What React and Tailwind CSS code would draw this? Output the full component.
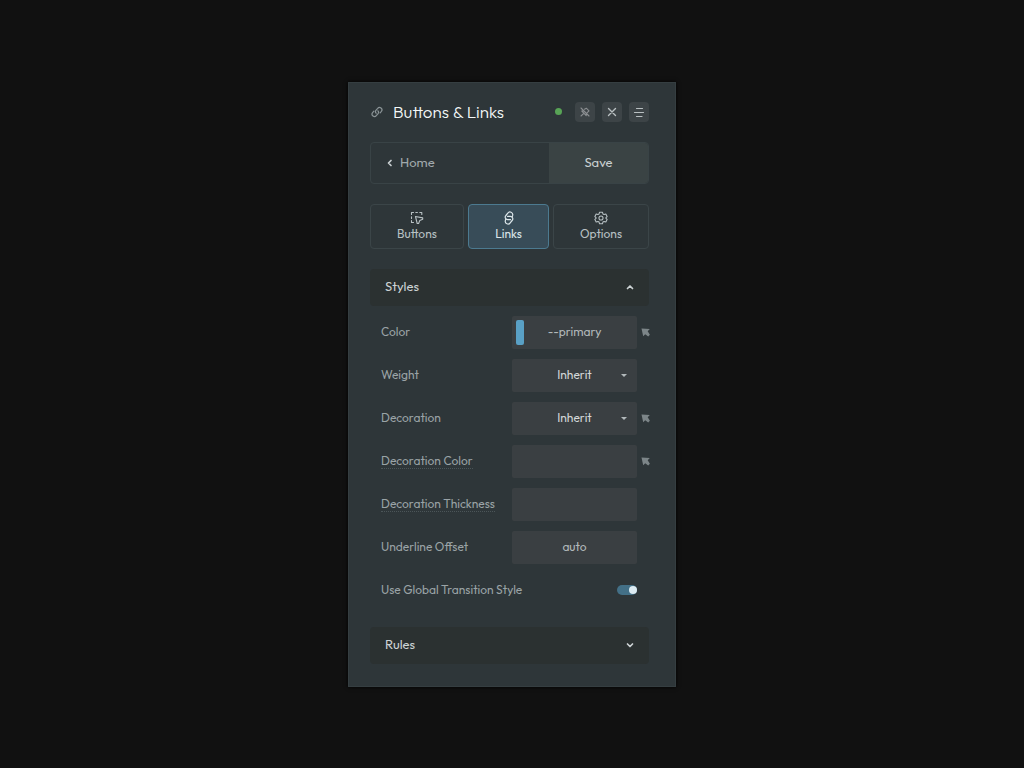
import { useState } from "react";

function ChainIcon({ className }) {
  return (
    <svg viewBox="0 0 12 12" className={className} fill="none" stroke="currentColor" strokeWidth="1.200" strokeLinecap="round" strokeLinejoin="round" aria-hidden="true">
      <path d="M5.200 7.200A2.100 2.100 0 0 1 4.900 4.400L6.700 2.400A2.300 2.300 0 0 1 10.400 5.300L9.100 6.800" />
      <path d="M6.800 4.800A2.100 2.100 0 0 1 7.100 7.600L5.300 9.600A2.300 2.300 0 0 1 1.600 6.700L2.900 5.200" />
    </svg>
  );
}

function UnpinIcon() {
  return (
    <svg viewBox="0 0 12 12" className="size-3" fill="none" stroke="currentColor" strokeWidth="1.100" strokeLinecap="round" strokeLinejoin="round" aria-hidden="true">
      <path d="M2 2l8 8M5.500 3.200L7.300 2.200l2.700 2.600-1.800 1.800M2.800 5h1.700M2.800 5l4.400 4.600V8M4.800 7.400L2 10" />
    </svg>
  );
}

function CloseIcon() {
  return (
    <svg viewBox="0 0 12 12" className="size-3" fill="none" stroke="currentColor" strokeWidth="1.400" strokeLinecap="round" aria-hidden="true">
      <path d="M2.500 2.500l7 7M9.500 2.500l-7 7" />
    </svg>
  );
}

function MenuIcon() {
  return (
    <svg viewBox="0 0 12 12" className="size-3" fill="none" stroke="currentColor" strokeWidth="1.200" strokeLinecap="round" aria-hidden="true">
      <path d="M3.500 2.500h6M1.500 6.500h9M3.500 10.500h5.500" />
    </svg>
  );
}

function ButtonsIcon() {
  return (
    <svg viewBox="0 0 14 14" className="size-3.5" fill="none" stroke="currentColor" strokeWidth="1.100" strokeLinecap="round" strokeLinejoin="round" aria-hidden="true">
      <path d="M1.500 3.500v-2h2M5.800 1.500h1.600M9.800 1.500h2v2M1.500 5.800v1.600M1.500 9.500v2h2" />
      <path d="M5.500 5.500l7.200 1.400v1.300l-2.900 1.200-1.200 3.100H7.200z" />
    </svg>
  );
}

function LinksIcon() {
  return (
    <svg viewBox="0 0 14 14" className="size-3.5" fill="none" stroke="currentColor" strokeWidth="1.200" strokeLinecap="round" strokeLinejoin="round" aria-hidden="true">
      <path d="M8.500 8.700H5.800A2.500 2.500 0 0 1 3.900 4.500L5.800 2.200A2.700 2.700 0 0 1 10.700 4.200L10.200 6" />
      <path d="M5.500 5.300h2.700A2.500 2.500 0 0 1 10.100 9.500L8.200 11.800A2.700 2.700 0 0 1 3.300 9.800L3.800 8" />
    </svg>
  );
}

function OptionsIcon() {
  return (
    <svg viewBox="0 0 24 24" className="size-3.5" fill="none" stroke="currentColor" strokeWidth="1.800" strokeLinejoin="round" aria-hidden="true">
      <path d="M9.500 2h5l.8 3 2 1.100 3-.8 2.200 4.200-2 2v1l2 2-2.200 4.200-3-.8-2 1.100-.8 3h-5l-.8-3-2-1.100-3 .8-2.200-4.200 2-2v-1l-2-2 2.200-4.200 3 .8 2-1.100z" />
      <circle cx="12" cy="12" r="3.500" />
    </svg>
  );
}

function Chevron({ d }) {
  return (
    <svg viewBox="0 0 8 8" className="size-2 shrink-0" fill="none" stroke="currentColor" strokeWidth="1.700" strokeLinecap="round" strokeLinejoin="round" aria-hidden="true">
      <path d={d} />
    </svg>
  );
}

function PickButton({ label }) {
  return (
    <button type="button" aria-label={label} className="text-[#7c8588]">
      <svg viewBox="0 0 9 9" className="size-[9px]" fill="currentColor" aria-hidden="true">
        <path d="M.5.500L8.800 1 6.700 3.200 8.900 6.800 7.200 8.500 4.200 6.300 2.200 8.200z" />
      </svg>
    </button>
  );
}

function ToolButton({ label, dim, children }) {
  return (
    <button
      type="button"
      aria-label={label}
      className={`flex size-5 items-center justify-center rounded bg-[#3d4447] ${dim ? "text-[#8b8e91]" : "text-[#b9c0c2]"}`}
    >
      {children}
    </button>
  );
}

function Tab({ label, active, grow, onClick, children }) {
  return (
    <button
      type="button"
      aria-pressed={active}
      onClick={onClick}
      className={`flex h-[45px] flex-col items-center justify-center rounded border ${grow} ${
        active ? "border-[#4c7a90] bg-[#384c58] text-[#dce6ea]" : "border-[#3b4548] text-[#b8c1c4]"
      }`}
    >
      {children}
      <span className="mt-px text-xs leading-4">{label}</span>
    </button>
  );
}

function Section({ title, open, onToggle }) {
  return (
    <h2>
      <button
        type="button"
        aria-expanded={open}
        onClick={onToggle}
        className="flex h-[37px] w-full items-center justify-between rounded bg-[#2b3131] px-[15px] text-[13px] text-[#ccd2d4]"
      >
        {title}
        <Chevron d={open ? "M1.500 5.500L4 3l2.500 2.500" : "M1.500 3L4 5.500 6.500 3"} />
      </button>
    </h2>
  );
}

function Row({ id, label, hint, pick, children }) {
  return (
    <div className="flex h-[33px] items-center gap-1">
      <label htmlFor={id} className="flex-1 text-xs leading-4 text-[#9aa3a6]">
        <span className={hint ? "border-b border-dotted border-[#4b5558]" : ""}>{label}</span>
      </label>
      {children}
      <div className="flex w-2">{pick && <PickButton label={`Pick ${label}`} />}</div>
    </div>
  );
}

const fieldStyle =
  "h-[33px] w-full appearance-none rounded-xs bg-[#3a3f42] text-center text-xs outline-none focus-visible:ring-1 focus-visible:ring-[#4c7a90]";

function TextField({ id, value, swatch }) {
  return (
    <div className="relative w-[125px]">
      <input id={id} type="text" defaultValue={value} className={`${fieldStyle} pb-0.5 text-[#b2b9bb]`} />
      {swatch && <span className="absolute top-1 left-1 h-[25px] w-2 rounded-xs bg-[#59a0c5]" />}
    </div>
  );
}

function SelectField({ id }) {
  return (
    <div className="relative w-[125px]">
      <select id={id} defaultValue="Inherit" className={`${fieldStyle} text-[#d2d7d9] [text-align-last:center]`}>
        <option>Inherit</option>
        <option>None</option>
      </select>
      <svg viewBox="0 0 6 3" className="pointer-events-none absolute top-[15px] right-2.5 h-[3px] w-1.5 fill-[#b2b9bb]" aria-hidden="true">
        <path d="M0 0h6L3 3z" />
      </svg>
    </div>
  );
}

export default function App() {
  const [tab, setTab] = useState("Links");
  const [styles, setStyles] = useState(true);
  const [rules, setRules] = useState(false);

  return (
    <main className="flex min-h-screen items-center justify-center bg-[#111111] font-['Outfit','Lato',sans-serif]">
      <section className="w-full max-w-[328px] border border-[#353e41] bg-[#2e3639] pt-[19px] pr-[26px] pb-[22px] pl-[21px] shadow-[0_0_4px_#000]">
        <header className="flex h-5 items-center">
          <ChainIcon className="ml-px size-3 text-[#8b9497]" />
          <h1 className="ml-2.5 flex-1 text-[17px] leading-5 font-light text-[#f4f8f8]">Buttons &amp; Links</h1>
          <div className="flex items-center gap-[7px]">
            <span className="mr-1.5 size-[7px] rounded-full bg-[#58a456]" />
            <ToolButton label="Unpin" dim><UnpinIcon /></ToolButton>
            <ToolButton label="Close"><CloseIcon /></ToolButton>
            <ToolButton label="Menu"><MenuIcon /></ToolButton>
          </div>
        </header>

        <div className="mt-5 flex h-[42px] overflow-hidden rounded border border-[#394346]">
          <button type="button" className="flex flex-1 items-center gap-1.5 pl-[15px] text-[13px] text-[#a0a9ac]">
            <span className="flex text-[#c8cfd1]"><Chevron d="M5 1.500L2.500 4 5 6.500" /></span>
            Home
          </button>
          <button type="button" className="w-[99px] bg-[#3a4344] text-[13px] text-[#c7cecf]">Save</button>
        </div>

        <nav className="mt-5 flex gap-1" aria-label="Panels">
          <Tab label="Buttons" grow="grow-94 basis-0" active={tab === "Buttons"} onClick={() => setTab("Buttons")}><ButtonsIcon /></Tab>
          <Tab label="Links" grow="grow-81 basis-0" active={tab === "Links"} onClick={() => setTab("Links")}><LinksIcon /></Tab>
          <Tab label="Options" grow="grow-96 basis-0" active={tab === "Options"} onClick={() => setTab("Options")}><OptionsIcon /></Tab>
        </nav>

        <div className="mt-5">
          <Section title="Styles" open={styles} onToggle={() => setStyles(!styles)} />
          {styles && (
            <div className="flex flex-col gap-2.5 pt-2.5 pl-[11px]">
              <Row id="color" label="Color" pick><TextField id="color" value="--primary" swatch /></Row>
              <Row id="weight" label="Weight"><SelectField id="weight" /></Row>
              <Row id="decoration" label="Decoration" pick><SelectField id="decoration" /></Row>
              <Row id="decoration-color" label="Decoration Color" hint pick><TextField id="decoration-color" /></Row>
              <Row id="thickness" label="Decoration Thickness" hint><TextField id="thickness" /></Row>
              <Row id="offset" label="Underline Offset"><TextField id="offset" value="auto" /></Row>
              <Row id="transition" label="Use Global Transition Style">
                <input
                  id="transition"
                  type="checkbox"
                  role="switch"
                  defaultChecked
                  className="flex h-2.5 w-5 appearance-none items-center rounded-full bg-[#586164] before:size-2 before:rounded-full before:bg-[#dcebf2] checked:justify-end checked:bg-[#437087]"
                />
              </Row>
            </div>
          )}
        </div>

        <div className="mt-5">
          <Section title="Rules" open={rules} onToggle={() => setRules(!rules)} />
        </div>
      </section>
    </main>
  );
}
